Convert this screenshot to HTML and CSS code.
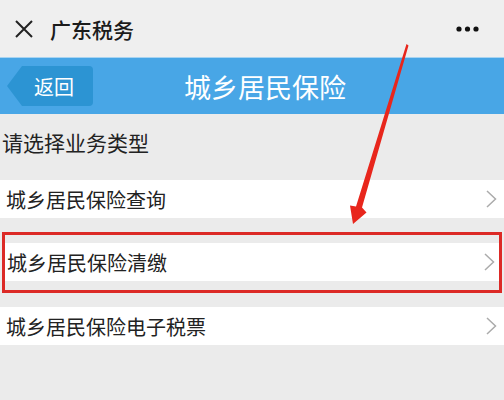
FILE: index.html
```html
<!DOCTYPE html>
<html lang="zh-CN">
<head>
  <meta charset="UTF-8" />
  <title>城乡居民保险</title>
  <link rel="stylesheet" href="styles.css">
</head>
<body>
  <div class="page">

    <div class="topbar">
      <svg class="close" width="18" height="18" viewBox="0 0 18 18">
        <path d="M1 1 L17 17 M17 1 L1 17" stroke="#222" stroke-width="2" fill="none" />
      </svg>
      <span class="app-name">广东税务</span>
      <svg class="more" width="26" height="8" viewBox="0 0 26 8">
        <circle cx="4" cy="4" r="2.6" fill="#111" />
        <circle cx="12.5" cy="4" r="2.6" fill="#111" />
        <circle cx="21" cy="4" r="2.6" fill="#111" />
      </svg>
    </div>

    <div class="navbar">
      <a class="back" href="#">返回</a>
      <h1>城乡居民保险</h1>
    </div>

    <div class="prompt">请选择业务类型</div>

    <div class="list">
      <a class="row" href="#">
        <span>城乡居民保险查询</span>
        <svg class="chev" width="11" height="18" viewBox="0 0 11 18"><polyline points="1,1 9.5,9 1,17" /></svg>
      </a>

      <!-- highlighted choice -->
      <div class="mark">
        <a class="row" href="#">
          <span>城乡居民保险清缴</span>
          <svg class="chev" width="11" height="18" viewBox="0 0 11 18"><polyline points="1,1 9.5,9 1,17" /></svg>
        </a>
      </div>

      <a class="row" href="#">
        <span>城乡居民保险电子税票</span>
        <svg class="chev" width="11" height="18" viewBox="0 0 11 18"><polyline points="1,1 9.5,9 1,17" /></svg>
      </a>
    </div>

    <svg class="arrow" width="504" height="400" viewBox="0 0 504 400">
      <polygon fill="#e8261c" points="406.5,44 408.5,45.5 362,207.5 366.5,212.5 353,224 350,205.5 356,206.5" />
    </svg>
  </div>
</body>
</html>
```

FILE: styles.css
```css
* { margin: 0; padding: 0; box-sizing: border-box; }
body {
  font-family: "Noto Sans CJK SC", "Noto Sans", sans-serif;
  background: #ebebeb;
  color: #222;
}
a { text-decoration: none; color: inherit; }
.page {
  position: relative;
  width: 504px;
  height: 400px;
  overflow: hidden;
}
.topbar {
  height: 57px;
  background: #efefef;
  display: flex;
  align-items: center;
  padding: 0 23px 0 15px;
}
.close { margin-right: 17px; }
.app-name {
  font-size: 21px;
  font-weight: 500;
  color: #1b1b1b;
  flex: 1;
}
.navbar {
  height: 57px;
  background: #48a6e6;
  border-top: 1px solid #a8d4f1;
  display: flex;
  align-items: center;
  padding-left: 7px;
}
.back {
  width: 86px;
  height: 40px;
  background: #2c94d3;
  color: #fff;
  font-size: 20px;
  display: flex;
  align-items: center;
  padding-left: 27px;
  border-radius: 0 4px 4px 0;
  clip-path: polygon(15px 0, 100% 0, 100% 100%, 15px 100%, 0 50%);
}
.navbar h1 {
  flex: 1;
  text-align: center;
  padding-right: 67px;
  font-size: 27px;
  font-weight: 400;
  color: #fff;
}
.prompt {
  font-size: 21px;
  line-height: 28px;
  padding: 14px 0 24px 2px;
}
.list {
  display: flex;
  flex-direction: column;
  gap: 14px;
}
.row {
  height: 38px;
  background: #fff;
  display: flex;
  align-items: center;
  justify-content: space-between;
  padding: 0 7px 0 6px;
  font-size: 20px;
}
.chev polyline {
  fill: none;
  stroke: #ababab;
  stroke-width: 1.5;
}
.mark {
  margin: 0 2px;
  border: 3px solid #dc2a26;
  padding: 8px 0 9px;
}
.mark .row { padding: 0 4px 0 2px; }
.arrow {
  position: absolute;
  top: 0;
  left: 0;
  pointer-events: none;
}
```
